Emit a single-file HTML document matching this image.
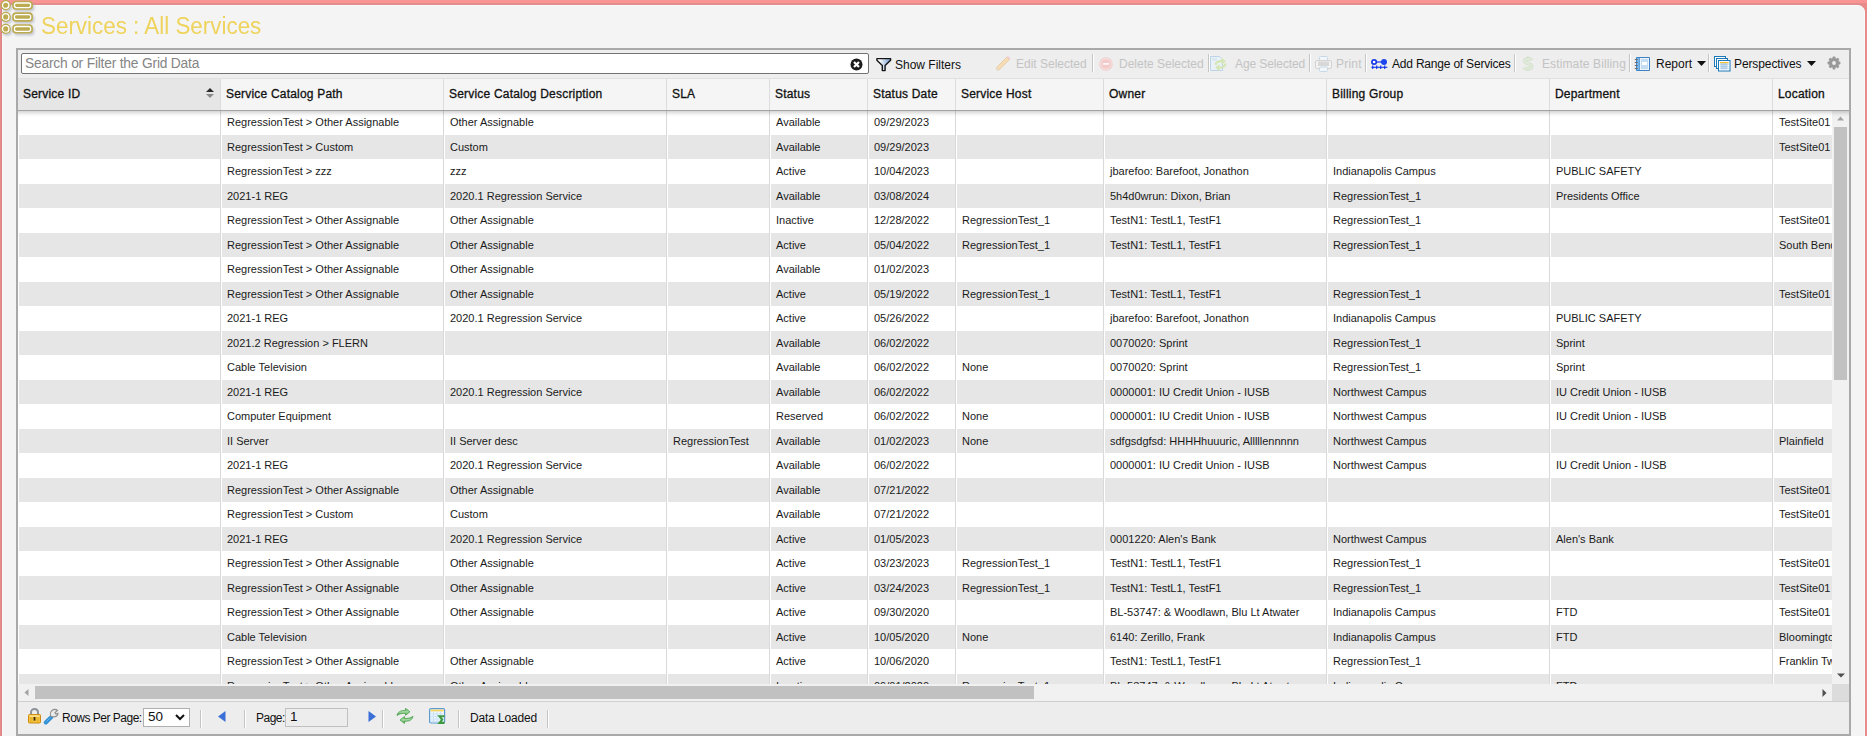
<!DOCTYPE html>
<html><head><meta charset="utf-8">
<style>
*{box-sizing:border-box}
html,body{margin:0;padding:0}
body{width:1867px;height:736px;overflow:hidden;background:#e98b8b;position:relative;font-family:"Liberation Sans",sans-serif}
#panel{position:absolute;left:2px;top:5px;width:1863px;height:740px;background:#f4f4f4;border:1px solid #f5fafa;border-top-right-radius:7px;border-top-left-radius:4px}
#ptop{position:absolute;left:0;top:0;width:1867px;height:3px;background:#f89494}
#ptop2{position:absolute;left:0;top:3px;width:1867px;height:2px;background:#e68b8b}
#pleft{position:absolute;left:1px;top:4px;width:1px;height:732px;background:#dc8383}
#title{position:absolute;left:41px;top:11.4px;font-size:23.5px;color:#eed35c;white-space:nowrap;line-height:30px;transform:scaleX(0.953);transform-origin:0 0}
#grid{position:absolute;left:16px;top:48px;width:1835px;height:688px;border:2px solid #a9a9a9;background:#fff}
#tb{position:absolute;left:0;top:0;width:1831px;height:28px;background:#eeeeee}
#search{position:absolute;left:3px;top:3px;width:848px;height:21px;border:1px solid #737373;border-radius:2px;background:#fff}
#search span{position:absolute;left:3px;top:0.5px;font-size:13.8px;letter-spacing:-0.2px;color:#858585;line-height:18px;white-space:nowrap}
#hdr{position:absolute;left:0;top:28px;width:1831px;height:32px;background:#f5f5f5;border-top:1px solid #e0e0e0}
.hc{position:absolute;top:0;height:31px}
.hc.sorted{background:#e6e6e6}
.ht{position:absolute;left:5px;top:8px;font-size:12px;font-weight:normal;-webkit-text-stroke:0.3px #111;letter-spacing:0.2px;color:#111;white-space:nowrap;line-height:14px}
.hl{position:absolute;top:0;width:1px;height:31px;background:#dcdcdc}
#hline{position:absolute;left:0;top:60px;width:1831px;height:1px;background:#a3a3a3;z-index:3}
#shadow{position:absolute;left:0;top:61px;width:1831px;height:6px;background:linear-gradient(rgba(0,0,0,0.16),rgba(0,0,0,0.04) 60%,rgba(0,0,0,0));z-index:3}
#data{position:absolute;left:0;top:60px;width:1814px;height:574px;overflow:hidden;background:#fff}
.row{position:absolute;left:0;width:1900px}
.c{position:absolute;top:0;height:100%;overflow:hidden;white-space:nowrap}
.row.alt .c{background:#e6e6e6}
.c span{position:absolute;left:5px;top:0;font-size:11px;color:#1a1a1a;line-height:24px}
.vl{position:absolute;top:0;width:1px;height:574px;background:#d9d9d9;z-index:2}
#vs{position:absolute;left:1814px;top:60px;width:17px;height:574px;background:#f1f1f1}
#hs{position:absolute;left:0;top:634px;width:1814px;height:17px;background:#f1f1f1}
#corner{position:absolute;left:1814px;top:634px;width:17px;height:17px;background:#dcdcdc}
#ft{position:absolute;left:0;top:651px;width:1831px;height:33px;background:#ededed;border-top:1px solid #cfcfcf}
.ftt{position:absolute;font-size:12px;color:#111;white-space:nowrap;line-height:14px;margin-top:-4px}
.sep{position:absolute;width:1px;background:#c4c4c4;box-shadow:1px 0 0 #fff}
.tbt{position:absolute;top:7px;font-size:12px;color:#111;white-space:nowrap;line-height:14px}
.tbt.dis{color:#c3c3c3}
.ic{position:absolute}
#sel{position:absolute;left:125px;top:6px;width:47px;height:19px;border:1px solid #b0b0b0;background:#fff}
#sel span{position:absolute;left:4px;top:0px;font-size:13.5px;color:#111;line-height:15px}
#pg{position:absolute;left:267px;top:6px;width:63px;height:19px;border:1px solid #c0c0c0;background:#ededed}
#pg span{position:absolute;left:4px;top:0px;font-size:13.5px;color:#111;line-height:15px}
.sort{position:absolute;left:188px;top:9px;width:8px;height:11px}
.sort:before{content:"";position:absolute;left:0;top:0;border-left:4px solid transparent;border-right:4px solid transparent;border-bottom:4.5px solid #2a2a2a}
.sort:after{content:"";position:absolute;left:0;top:6px;border-left:4px solid transparent;border-right:4px solid transparent;border-top:4.5px solid #8a8a8a}
#vthumb{position:absolute;left:2px;top:17px;width:13px;height:253px;background:#c1c1c1}
#hthumb{position:absolute;left:17px;top:2px;width:999px;height:13px;background:#c1c1c1}
</style></head><body>
<div id="ptop"></div><div id="ptop2"></div><div id="pleft"></div><div id="panel"></div>
<svg id="logo" style="position:absolute;left:0;top:0" width="40" height="40" viewBox="0 0 40 40">
<defs><filter id="sh" x="-20%" y="-20%" width="150%" height="150%"><feGaussianBlur stdDeviation="1.2"/></filter></defs>
<g filter="url(#sh)" fill="#9aa0b0" opacity="0.5" transform="translate(1.5,2)">
<circle cx="5.7" cy="5.2" r="5.1"/><circle cx="5.7" cy="16.9" r="5.1"/><circle cx="5.7" cy="28.9" r="5.1"/>
<rect x="12.2" y="0.8" width="20.7" height="9" rx="3.8"/><rect x="12.2" y="12.3" width="20.7" height="9.4" rx="3.8"/><rect x="12.2" y="24.2" width="20.7" height="9.4" rx="3.8"/></g>
<g fill="#bcab50">
<circle cx="5.7" cy="5.2" r="5.1"/><circle cx="5.7" cy="16.9" r="5.1"/><circle cx="5.7" cy="28.9" r="5.1"/>
<rect x="12.2" y="0.8" width="20.7" height="9" rx="3.8"/><rect x="12.2" y="12.3" width="20.7" height="9.4" rx="3.8"/><rect x="12.2" y="24.2" width="20.7" height="9.4" rx="3.8"/></g>
<g fill="none" stroke="#fff" stroke-width="1.3">
<circle cx="5.7" cy="5.2" r="3.2"/><circle cx="5.7" cy="16.9" r="3.2"/><circle cx="5.7" cy="28.9" r="3.2"/>
<rect x="14.45" y="3.0" width="16.2" height="4.6" rx="2"/><rect x="14.45" y="14.6" width="16.2" height="4.8" rx="2"/><rect x="14.45" y="26.5" width="16.2" height="4.8" rx="2"/></g>
</svg>
<div id="title">Services : All Services</div>
<div id="grid">
 <div id="tb">

  <div id="search"><span>Search or Filter the Grid Data</span>
   <svg style="position:absolute;left:828px;top:4px" width="13" height="13" viewBox="0 0 13 13"><circle cx="6.5" cy="6.5" r="6" fill="#1b1b1b"/><path d="M4 4L9 9M9 4L4 9" stroke="#fff" stroke-width="2.2" stroke-linecap="butt"/></svg>
  </div>
  <svg class="ic" style="left:858px;top:7px" width="16" height="15" viewBox="0 0 16 15"><defs><linearGradient id="fg" x1="0" x2="1"><stop offset="0.2" stop-color="#fff"/><stop offset="1" stop-color="#6f98cc"/></linearGradient></defs><path d="M0.9 1.6H14.6V3.2L9.1 8.4V13.6H6.3V8.4L0.9 3.2Z" fill="url(#fg)" stroke="#151515" stroke-width="1.4" stroke-linejoin="round"/></svg>
  <div class="tbt" style="left:877px;top:8px">Show Filters</div>
  <svg class="ic" style="left:977px;top:5px" width="17" height="17" viewBox="0 0 17 17"><path d="M2 15L1.5 12.5L12 2L14.5 4.5L4 15Z" fill="#f6dcb4" stroke="#e8cfa8" stroke-width="1"/><path d="M12 2L14.5 4.5L15.5 3.5L13 1Z" fill="#f0c8dc"/><path d="M1.5 12.5L2 15L4 15Z" fill="#ddd"/></svg>
  <div class="tbt dis" style="left:998px">Edit Selected</div>
  <div class="sep" style="left:1074px;top:4px;height:18px"></div>
  <svg class="ic" style="left:1081px;top:7px" width="14" height="14" viewBox="0 0 14 14"><circle cx="7" cy="7" r="6.8" fill="#f1cfcf"/><circle cx="7" cy="7" r="5.2" fill="#f2caca" stroke="#f7e3e3" stroke-width="0.9"/><rect x="4" y="6" width="6" height="1.8" fill="#fbf6f6"/></svg>
  <div class="tbt dis" style="left:1101px">Delete Selected</div>
  <div class="sep" style="left:1190px;top:4px;height:18px"></div>
  <svg class="ic" style="left:1192px;top:6px" width="17" height="16" viewBox="0 0 17 16"><path d="M0.5 0.5H9.5L12.5 3.5V14.5H0.5Z" fill="#eaf1f7" stroke="#bad3e7"/><rect x="2" y="2" width="5" height="3" fill="#dde9f2"/><g fill="none" stroke="#d3e6b4" stroke-width="2.2"><path d="M5.6 8.8Q6 5.2 12 5.2"/><path d="M15.4 7.5Q15 11.6 9 11.6"/></g><g fill="#d3e6b4"><path d="M11.5 1.8L16 5.2L11.5 8.6Z"/><path d="M9.5 8.2L5 11.6L9.5 15Z"/></g></svg>
  <div class="tbt dis" style="left:1217px;letter-spacing:-0.1px">Age Selected</div>
  <div class="sep" style="left:1291px;top:4px;height:18px"></div>
  <svg class="ic" style="left:1297px;top:6px" width="17" height="16" viewBox="0 0 17 16"><rect x="4.5" y="0.5" width="8" height="5.5" rx="1" fill="#f3f6f9" stroke="#c6d8e8"/><rect x="0.5" y="4.5" width="16" height="8" rx="1.5" fill="#f3f3f3" stroke="#d3d3d3"/><rect x="3" y="5.5" width="11" height="4.5" fill="#d8d8d8"/><rect x="4.5" y="11" width="8" height="4.5" rx="1" fill="#f3f6f9" stroke="#c6d8e8"/></svg>
  <div class="tbt dis" style="left:1318px;letter-spacing:0.2px">Print</div>
  <div class="sep" style="left:1347px;top:4px;height:18px"></div>
  <svg class="ic" style="left:1353px;top:8px" width="18" height="12" viewBox="0 0 18 12"><circle cx="3.1" cy="4" r="2.2" fill="#fff" stroke="#1838e6" stroke-width="1.7"/><circle cx="13" cy="4" r="3" fill="#1d47ee"/><rect x="5" y="3.4" width="6" height="1.2" fill="#1838e6"/><rect x="0.4" y="8.7" width="16" height="1.2" fill="#1c44ec"/><path d="M1.7 7.6V10.9M5.7 7.6V10.9M9.7 7.6V10.9M13.7 7.6V10.9" stroke="#1838e6" stroke-width="1.2"/></svg>
  <div class="tbt" style="left:1374px;letter-spacing:-0.2px">Add Range of Services</div>
  <div class="sep" style="left:1496px;top:4px;height:18px"></div>
  <svg class="ic" style="left:1504px;top:6px" width="12" height="16" viewBox="0 0 12 16"><path d="M6 0.5V3M6 12.5V15" stroke="#d2dfca" stroke-width="2.4"/><path d="M9.6 4.3C8.6 2.6 2.7 2.3 2.6 5C2.5 7.6 9.7 7.2 9.6 10.5C9.5 13.4 3.2 13.3 2.2 11.2" fill="none" stroke="#d2dfca" stroke-width="3.6"/><path d="M9.6 4.3C8.6 2.6 2.7 2.3 2.6 5C2.5 7.6 9.7 7.2 9.6 10.5C9.5 13.4 3.2 13.3 2.2 11.2" fill="none" stroke="#e0ead9" stroke-width="2"/></svg>
  <div class="tbt dis" style="left:1524px;letter-spacing:0.12px">Estimate Billing</div>
  <div class="sep" style="left:1611px;top:4px;height:18px"></div>
  <svg class="ic" style="left:1616px;top:5px" width="17" height="17" viewBox="0 0 17 17"><rect x="2" y="2" width="14" height="14" rx="1" fill="#3d82c4"/><rect x="3" y="3" width="2.6" height="12" fill="#7ab8ea"/><rect x="6" y="3" width="9" height="12" fill="#eef5fc"/><rect x="7" y="4" width="7" height="10" fill="#c5ddf2"/><rect x="8" y="7" width="5" height="3" fill="#fff"/><path d="M0.8 4.5H3.8M0.8 7.5H3.8M0.8 10.5H3.8M0.8 13.5H3.8" stroke="#6f6f6f" stroke-width="1.1"/></svg>
  <div class="tbt" style="left:1638px">Report</div>
  <svg class="ic" style="left:1679px;top:11px" width="9" height="5" viewBox="0 0 9 5"><path d="M0 0H9L4.5 5Z" fill="#111"/></svg>
  <div class="sep" style="left:1690px;top:4px;height:18px"></div>
  <svg class="ic" style="left:1696px;top:6px" width="17" height="16" viewBox="0 0 17 16"><rect x="0.5" y="0.5" width="11" height="10" fill="#fff" stroke="#1a78b8"/><rect x="2.5" y="2.5" width="11" height="10" fill="#fff" stroke="#1a78b8"/><rect x="4.5" y="4.5" width="11.5" height="10.5" fill="#fff" stroke="#1a78b8"/><rect x="6" y="6" width="8.5" height="1.3" fill="#f2c031"/><path d="M6 8.2H14.5M6 10.2H14.5M6 12.2H14.5M8 7.3V13.5M10 7.3V13.5M12 7.3V13.5" stroke="#9fc3e3" stroke-width="1"/></svg>
  <div class="tbt" style="left:1716px;letter-spacing:-0.1px">Perspectives</div>
  <svg class="ic" style="left:1789px;top:11px" width="9" height="5" viewBox="0 0 9 5"><path d="M0 0H9L4.5 5Z" fill="#111"/></svg>
  <svg class="ic" style="left:1809px;top:6px" width="14" height="14" viewBox="0 0 14 14"><g fill="#999"><circle cx="7" cy="7" r="5"/><rect x="5.6" y="0.6" width="2.8" height="12.8" rx="0.6"/><rect x="5.6" y="0.6" width="2.8" height="12.8" rx="0.6" transform="rotate(45 7 7)"/><rect x="5.6" y="0.6" width="2.8" height="12.8" rx="0.6" transform="rotate(90 7 7)"/><rect x="5.6" y="0.6" width="2.8" height="12.8" rx="0.6" transform="rotate(135 7 7)"/></g><circle cx="7" cy="7" r="1.9" fill="#eeeeee"/></svg>
 </div>
 <div id="hdr"><div class="hc sorted" style="left:0px;width:202px"><span class="ht">Service ID</span><span class="sort"></span></div><div class="hc" style="left:203px;width:222px"><span class="ht">Service Catalog Path</span></div><div class="hc" style="left:426px;width:222px"><span class="ht">Service Catalog Description</span></div><div class="hc" style="left:649px;width:102px"><span class="ht">SLA</span></div><div class="hc" style="left:752px;width:97px"><span class="ht">Status</span></div><div class="hc" style="left:850px;width:87px"><span class="ht">Status Date</span></div><div class="hc" style="left:938px;width:147px"><span class="ht">Service Host</span></div><div class="hc" style="left:1086px;width:222px"><span class="ht">Owner</span></div><div class="hc" style="left:1309px;width:222px"><span class="ht">Billing Group</span></div><div class="hc" style="left:1532px;width:222px"><span class="ht">Department</span></div><div class="hc" style="left:1755px;width:127px"><span class="ht">Location</span></div><div class="hl" style="left:202px"></div><div class="hl" style="left:425px"></div><div class="hl" style="left:648px"></div><div class="hl" style="left:751px"></div><div class="hl" style="left:849px"></div><div class="hl" style="left:937px"></div><div class="hl" style="left:1085px"></div><div class="hl" style="left:1308px"></div><div class="hl" style="left:1531px"></div><div class="hl" style="left:1754px"></div></div>
 <div id="data"><div class="row" style="top:0px;height:25px"><div class="c" style="left:1px;width:201px"><span></span></div><div class="c" style="left:204px;width:221px"><span>RegressionTest &gt; Other Assignable</span></div><div class="c" style="left:427px;width:221px"><span>Other Assignable</span></div><div class="c" style="left:650px;width:101px"><span></span></div><div class="c" style="left:753px;width:96px"><span>Available</span></div><div class="c" style="left:851px;width:86px"><span>09/29/2023</span></div><div class="c" style="left:939px;width:146px"><span></span></div><div class="c" style="left:1087px;width:221px"><span></span></div><div class="c" style="left:1310px;width:221px"><span></span></div><div class="c" style="left:1533px;width:221px"><span></span></div><div class="c" style="left:1756px;width:126px"><span>TestSite01</span></div></div><div class="row alt" style="top:25px;height:24px"><div class="c" style="left:1px;width:201px"><span></span></div><div class="c" style="left:204px;width:221px"><span>RegressionTest &gt; Custom</span></div><div class="c" style="left:427px;width:221px"><span>Custom</span></div><div class="c" style="left:650px;width:101px"><span></span></div><div class="c" style="left:753px;width:96px"><span>Available</span></div><div class="c" style="left:851px;width:86px"><span>09/29/2023</span></div><div class="c" style="left:939px;width:146px"><span></span></div><div class="c" style="left:1087px;width:221px"><span></span></div><div class="c" style="left:1310px;width:221px"><span></span></div><div class="c" style="left:1533px;width:221px"><span></span></div><div class="c" style="left:1756px;width:126px"><span>TestSite01</span></div></div><div class="row" style="top:49px;height:25px"><div class="c" style="left:1px;width:201px"><span></span></div><div class="c" style="left:204px;width:221px"><span>RegressionTest &gt; zzz</span></div><div class="c" style="left:427px;width:221px"><span>zzz</span></div><div class="c" style="left:650px;width:101px"><span></span></div><div class="c" style="left:753px;width:96px"><span>Active</span></div><div class="c" style="left:851px;width:86px"><span>10/04/2023</span></div><div class="c" style="left:939px;width:146px"><span></span></div><div class="c" style="left:1087px;width:221px"><span>jbarefoo: Barefoot, Jonathon</span></div><div class="c" style="left:1310px;width:221px"><span>Indianapolis Campus</span></div><div class="c" style="left:1533px;width:221px"><span>PUBLIC SAFETY</span></div><div class="c" style="left:1756px;width:126px"><span></span></div></div><div class="row alt" style="top:74px;height:24px"><div class="c" style="left:1px;width:201px"><span></span></div><div class="c" style="left:204px;width:221px"><span>2021-1 REG</span></div><div class="c" style="left:427px;width:221px"><span>2020.1 Regression Service</span></div><div class="c" style="left:650px;width:101px"><span></span></div><div class="c" style="left:753px;width:96px"><span>Available</span></div><div class="c" style="left:851px;width:86px"><span>03/08/2024</span></div><div class="c" style="left:939px;width:146px"><span></span></div><div class="c" style="left:1087px;width:221px"><span>5h4d0wrun: Dixon, Brian</span></div><div class="c" style="left:1310px;width:221px"><span>RegressionTest_1</span></div><div class="c" style="left:1533px;width:221px"><span>Presidents Office</span></div><div class="c" style="left:1756px;width:126px"><span></span></div></div><div class="row" style="top:98px;height:25px"><div class="c" style="left:1px;width:201px"><span></span></div><div class="c" style="left:204px;width:221px"><span>RegressionTest &gt; Other Assignable</span></div><div class="c" style="left:427px;width:221px"><span>Other Assignable</span></div><div class="c" style="left:650px;width:101px"><span></span></div><div class="c" style="left:753px;width:96px"><span>Inactive</span></div><div class="c" style="left:851px;width:86px"><span>12/28/2022</span></div><div class="c" style="left:939px;width:146px"><span>RegressionTest_1</span></div><div class="c" style="left:1087px;width:221px"><span>TestN1: TestL1, TestF1</span></div><div class="c" style="left:1310px;width:221px"><span>RegressionTest_1</span></div><div class="c" style="left:1533px;width:221px"><span></span></div><div class="c" style="left:1756px;width:126px"><span>TestSite01</span></div></div><div class="row alt" style="top:123px;height:24px"><div class="c" style="left:1px;width:201px"><span></span></div><div class="c" style="left:204px;width:221px"><span>RegressionTest &gt; Other Assignable</span></div><div class="c" style="left:427px;width:221px"><span>Other Assignable</span></div><div class="c" style="left:650px;width:101px"><span></span></div><div class="c" style="left:753px;width:96px"><span>Active</span></div><div class="c" style="left:851px;width:86px"><span>05/04/2022</span></div><div class="c" style="left:939px;width:146px"><span>RegressionTest_1</span></div><div class="c" style="left:1087px;width:221px"><span>TestN1: TestL1, TestF1</span></div><div class="c" style="left:1310px;width:221px"><span>RegressionTest_1</span></div><div class="c" style="left:1533px;width:221px"><span></span></div><div class="c" style="left:1756px;width:126px"><span>South Bend</span></div></div><div class="row" style="top:147px;height:25px"><div class="c" style="left:1px;width:201px"><span></span></div><div class="c" style="left:204px;width:221px"><span>RegressionTest &gt; Other Assignable</span></div><div class="c" style="left:427px;width:221px"><span>Other Assignable</span></div><div class="c" style="left:650px;width:101px"><span></span></div><div class="c" style="left:753px;width:96px"><span>Available</span></div><div class="c" style="left:851px;width:86px"><span>01/02/2023</span></div><div class="c" style="left:939px;width:146px"><span></span></div><div class="c" style="left:1087px;width:221px"><span></span></div><div class="c" style="left:1310px;width:221px"><span></span></div><div class="c" style="left:1533px;width:221px"><span></span></div><div class="c" style="left:1756px;width:126px"><span></span></div></div><div class="row alt" style="top:172px;height:24px"><div class="c" style="left:1px;width:201px"><span></span></div><div class="c" style="left:204px;width:221px"><span>RegressionTest &gt; Other Assignable</span></div><div class="c" style="left:427px;width:221px"><span>Other Assignable</span></div><div class="c" style="left:650px;width:101px"><span></span></div><div class="c" style="left:753px;width:96px"><span>Active</span></div><div class="c" style="left:851px;width:86px"><span>05/19/2022</span></div><div class="c" style="left:939px;width:146px"><span>RegressionTest_1</span></div><div class="c" style="left:1087px;width:221px"><span>TestN1: TestL1, TestF1</span></div><div class="c" style="left:1310px;width:221px"><span>RegressionTest_1</span></div><div class="c" style="left:1533px;width:221px"><span></span></div><div class="c" style="left:1756px;width:126px"><span>TestSite01</span></div></div><div class="row" style="top:196px;height:25px"><div class="c" style="left:1px;width:201px"><span></span></div><div class="c" style="left:204px;width:221px"><span>2021-1 REG</span></div><div class="c" style="left:427px;width:221px"><span>2020.1 Regression Service</span></div><div class="c" style="left:650px;width:101px"><span></span></div><div class="c" style="left:753px;width:96px"><span>Active</span></div><div class="c" style="left:851px;width:86px"><span>05/26/2022</span></div><div class="c" style="left:939px;width:146px"><span></span></div><div class="c" style="left:1087px;width:221px"><span>jbarefoo: Barefoot, Jonathon</span></div><div class="c" style="left:1310px;width:221px"><span>Indianapolis Campus</span></div><div class="c" style="left:1533px;width:221px"><span>PUBLIC SAFETY</span></div><div class="c" style="left:1756px;width:126px"><span></span></div></div><div class="row alt" style="top:221px;height:24px"><div class="c" style="left:1px;width:201px"><span></span></div><div class="c" style="left:204px;width:221px"><span>2021.2 Regression &gt; FLERN</span></div><div class="c" style="left:427px;width:221px"><span></span></div><div class="c" style="left:650px;width:101px"><span></span></div><div class="c" style="left:753px;width:96px"><span>Available</span></div><div class="c" style="left:851px;width:86px"><span>06/02/2022</span></div><div class="c" style="left:939px;width:146px"><span></span></div><div class="c" style="left:1087px;width:221px"><span>0070020: Sprint</span></div><div class="c" style="left:1310px;width:221px"><span>RegressionTest_1</span></div><div class="c" style="left:1533px;width:221px"><span>Sprint</span></div><div class="c" style="left:1756px;width:126px"><span></span></div></div><div class="row" style="top:245px;height:25px"><div class="c" style="left:1px;width:201px"><span></span></div><div class="c" style="left:204px;width:221px"><span>Cable Television</span></div><div class="c" style="left:427px;width:221px"><span></span></div><div class="c" style="left:650px;width:101px"><span></span></div><div class="c" style="left:753px;width:96px"><span>Available</span></div><div class="c" style="left:851px;width:86px"><span>06/02/2022</span></div><div class="c" style="left:939px;width:146px"><span>None</span></div><div class="c" style="left:1087px;width:221px"><span>0070020: Sprint</span></div><div class="c" style="left:1310px;width:221px"><span>RegressionTest_1</span></div><div class="c" style="left:1533px;width:221px"><span>Sprint</span></div><div class="c" style="left:1756px;width:126px"><span></span></div></div><div class="row alt" style="top:270px;height:24px"><div class="c" style="left:1px;width:201px"><span></span></div><div class="c" style="left:204px;width:221px"><span>2021-1 REG</span></div><div class="c" style="left:427px;width:221px"><span>2020.1 Regression Service</span></div><div class="c" style="left:650px;width:101px"><span></span></div><div class="c" style="left:753px;width:96px"><span>Available</span></div><div class="c" style="left:851px;width:86px"><span>06/02/2022</span></div><div class="c" style="left:939px;width:146px"><span></span></div><div class="c" style="left:1087px;width:221px"><span>0000001: IU Credit Union - IUSB</span></div><div class="c" style="left:1310px;width:221px"><span>Northwest Campus</span></div><div class="c" style="left:1533px;width:221px"><span>IU Credit Union - IUSB</span></div><div class="c" style="left:1756px;width:126px"><span></span></div></div><div class="row" style="top:294px;height:25px"><div class="c" style="left:1px;width:201px"><span></span></div><div class="c" style="left:204px;width:221px"><span>Computer Equipment</span></div><div class="c" style="left:427px;width:221px"><span></span></div><div class="c" style="left:650px;width:101px"><span></span></div><div class="c" style="left:753px;width:96px"><span>Reserved</span></div><div class="c" style="left:851px;width:86px"><span>06/02/2022</span></div><div class="c" style="left:939px;width:146px"><span>None</span></div><div class="c" style="left:1087px;width:221px"><span>0000001: IU Credit Union - IUSB</span></div><div class="c" style="left:1310px;width:221px"><span>Northwest Campus</span></div><div class="c" style="left:1533px;width:221px"><span>IU Credit Union - IUSB</span></div><div class="c" style="left:1756px;width:126px"><span></span></div></div><div class="row alt" style="top:319px;height:24px"><div class="c" style="left:1px;width:201px"><span></span></div><div class="c" style="left:204px;width:221px"><span>II Server</span></div><div class="c" style="left:427px;width:221px"><span>II Server desc</span></div><div class="c" style="left:650px;width:101px"><span>RegressionTest</span></div><div class="c" style="left:753px;width:96px"><span>Available</span></div><div class="c" style="left:851px;width:86px"><span>01/02/2023</span></div><div class="c" style="left:939px;width:146px"><span>None</span></div><div class="c" style="left:1087px;width:221px"><span>sdfgsdgfsd: HHHHhuuuric, Alllllennnnn</span></div><div class="c" style="left:1310px;width:221px"><span>Northwest Campus</span></div><div class="c" style="left:1533px;width:221px"><span></span></div><div class="c" style="left:1756px;width:126px"><span>Plainfield</span></div></div><div class="row" style="top:343px;height:25px"><div class="c" style="left:1px;width:201px"><span></span></div><div class="c" style="left:204px;width:221px"><span>2021-1 REG</span></div><div class="c" style="left:427px;width:221px"><span>2020.1 Regression Service</span></div><div class="c" style="left:650px;width:101px"><span></span></div><div class="c" style="left:753px;width:96px"><span>Available</span></div><div class="c" style="left:851px;width:86px"><span>06/02/2022</span></div><div class="c" style="left:939px;width:146px"><span></span></div><div class="c" style="left:1087px;width:221px"><span>0000001: IU Credit Union - IUSB</span></div><div class="c" style="left:1310px;width:221px"><span>Northwest Campus</span></div><div class="c" style="left:1533px;width:221px"><span>IU Credit Union - IUSB</span></div><div class="c" style="left:1756px;width:126px"><span></span></div></div><div class="row alt" style="top:368px;height:24px"><div class="c" style="left:1px;width:201px"><span></span></div><div class="c" style="left:204px;width:221px"><span>RegressionTest &gt; Other Assignable</span></div><div class="c" style="left:427px;width:221px"><span>Other Assignable</span></div><div class="c" style="left:650px;width:101px"><span></span></div><div class="c" style="left:753px;width:96px"><span>Available</span></div><div class="c" style="left:851px;width:86px"><span>07/21/2022</span></div><div class="c" style="left:939px;width:146px"><span></span></div><div class="c" style="left:1087px;width:221px"><span></span></div><div class="c" style="left:1310px;width:221px"><span></span></div><div class="c" style="left:1533px;width:221px"><span></span></div><div class="c" style="left:1756px;width:126px"><span>TestSite01</span></div></div><div class="row" style="top:392px;height:25px"><div class="c" style="left:1px;width:201px"><span></span></div><div class="c" style="left:204px;width:221px"><span>RegressionTest &gt; Custom</span></div><div class="c" style="left:427px;width:221px"><span>Custom</span></div><div class="c" style="left:650px;width:101px"><span></span></div><div class="c" style="left:753px;width:96px"><span>Available</span></div><div class="c" style="left:851px;width:86px"><span>07/21/2022</span></div><div class="c" style="left:939px;width:146px"><span></span></div><div class="c" style="left:1087px;width:221px"><span></span></div><div class="c" style="left:1310px;width:221px"><span></span></div><div class="c" style="left:1533px;width:221px"><span></span></div><div class="c" style="left:1756px;width:126px"><span>TestSite01</span></div></div><div class="row alt" style="top:417px;height:24px"><div class="c" style="left:1px;width:201px"><span></span></div><div class="c" style="left:204px;width:221px"><span>2021-1 REG</span></div><div class="c" style="left:427px;width:221px"><span>2020.1 Regression Service</span></div><div class="c" style="left:650px;width:101px"><span></span></div><div class="c" style="left:753px;width:96px"><span>Active</span></div><div class="c" style="left:851px;width:86px"><span>01/05/2023</span></div><div class="c" style="left:939px;width:146px"><span></span></div><div class="c" style="left:1087px;width:221px"><span>0001220: Alen&#x27;s Bank</span></div><div class="c" style="left:1310px;width:221px"><span>Northwest Campus</span></div><div class="c" style="left:1533px;width:221px"><span>Alen&#x27;s Bank</span></div><div class="c" style="left:1756px;width:126px"><span></span></div></div><div class="row" style="top:441px;height:25px"><div class="c" style="left:1px;width:201px"><span></span></div><div class="c" style="left:204px;width:221px"><span>RegressionTest &gt; Other Assignable</span></div><div class="c" style="left:427px;width:221px"><span>Other Assignable</span></div><div class="c" style="left:650px;width:101px"><span></span></div><div class="c" style="left:753px;width:96px"><span>Active</span></div><div class="c" style="left:851px;width:86px"><span>03/23/2023</span></div><div class="c" style="left:939px;width:146px"><span>RegressionTest_1</span></div><div class="c" style="left:1087px;width:221px"><span>TestN1: TestL1, TestF1</span></div><div class="c" style="left:1310px;width:221px"><span>RegressionTest_1</span></div><div class="c" style="left:1533px;width:221px"><span></span></div><div class="c" style="left:1756px;width:126px"><span>TestSite01</span></div></div><div class="row alt" style="top:466px;height:24px"><div class="c" style="left:1px;width:201px"><span></span></div><div class="c" style="left:204px;width:221px"><span>RegressionTest &gt; Other Assignable</span></div><div class="c" style="left:427px;width:221px"><span>Other Assignable</span></div><div class="c" style="left:650px;width:101px"><span></span></div><div class="c" style="left:753px;width:96px"><span>Active</span></div><div class="c" style="left:851px;width:86px"><span>03/24/2023</span></div><div class="c" style="left:939px;width:146px"><span>RegressionTest_1</span></div><div class="c" style="left:1087px;width:221px"><span>TestN1: TestL1, TestF1</span></div><div class="c" style="left:1310px;width:221px"><span>RegressionTest_1</span></div><div class="c" style="left:1533px;width:221px"><span></span></div><div class="c" style="left:1756px;width:126px"><span>TestSite01</span></div></div><div class="row" style="top:490px;height:25px"><div class="c" style="left:1px;width:201px"><span></span></div><div class="c" style="left:204px;width:221px"><span>RegressionTest &gt; Other Assignable</span></div><div class="c" style="left:427px;width:221px"><span>Other Assignable</span></div><div class="c" style="left:650px;width:101px"><span></span></div><div class="c" style="left:753px;width:96px"><span>Active</span></div><div class="c" style="left:851px;width:86px"><span>09/30/2020</span></div><div class="c" style="left:939px;width:146px"><span></span></div><div class="c" style="left:1087px;width:221px"><span>BL-53747: &amp; Woodlawn, Blu Lt Atwater</span></div><div class="c" style="left:1310px;width:221px"><span>Indianapolis Campus</span></div><div class="c" style="left:1533px;width:221px"><span>FTD</span></div><div class="c" style="left:1756px;width:126px"><span>TestSite01</span></div></div><div class="row alt" style="top:515px;height:24px"><div class="c" style="left:1px;width:201px"><span></span></div><div class="c" style="left:204px;width:221px"><span>Cable Television</span></div><div class="c" style="left:427px;width:221px"><span></span></div><div class="c" style="left:650px;width:101px"><span></span></div><div class="c" style="left:753px;width:96px"><span>Active</span></div><div class="c" style="left:851px;width:86px"><span>10/05/2020</span></div><div class="c" style="left:939px;width:146px"><span>None</span></div><div class="c" style="left:1087px;width:221px"><span>6140: Zerillo, Frank</span></div><div class="c" style="left:1310px;width:221px"><span>Indianapolis Campus</span></div><div class="c" style="left:1533px;width:221px"><span>FTD</span></div><div class="c" style="left:1756px;width:126px"><span>Bloomington</span></div></div><div class="row" style="top:539px;height:25px"><div class="c" style="left:1px;width:201px"><span></span></div><div class="c" style="left:204px;width:221px"><span>RegressionTest &gt; Other Assignable</span></div><div class="c" style="left:427px;width:221px"><span>Other Assignable</span></div><div class="c" style="left:650px;width:101px"><span></span></div><div class="c" style="left:753px;width:96px"><span>Active</span></div><div class="c" style="left:851px;width:86px"><span>10/06/2020</span></div><div class="c" style="left:939px;width:146px"><span></span></div><div class="c" style="left:1087px;width:221px"><span>TestN1: TestL1, TestF1</span></div><div class="c" style="left:1310px;width:221px"><span>RegressionTest_1</span></div><div class="c" style="left:1533px;width:221px"><span></span></div><div class="c" style="left:1756px;width:126px"><span>Franklin Twp</span></div></div><div class="row alt" style="top:564px;height:24px"><div class="c" style="left:1px;width:201px"><span></span></div><div class="c" style="left:204px;width:221px"><span>RegressionTest &gt; Other Assignable</span></div><div class="c" style="left:427px;width:221px"><span>Other Assignable</span></div><div class="c" style="left:650px;width:101px"><span></span></div><div class="c" style="left:753px;width:96px"><span>Inactive</span></div><div class="c" style="left:851px;width:86px"><span>09/01/2020</span></div><div class="c" style="left:939px;width:146px"><span>RegressionTest_1</span></div><div class="c" style="left:1087px;width:221px"><span>BL-53747: &amp; Woodlawn, Blu Lt Atwater</span></div><div class="c" style="left:1310px;width:221px"><span>Indianapolis Campus</span></div><div class="c" style="left:1533px;width:221px"><span>FTD</span></div><div class="c" style="left:1756px;width:126px"><span></span></div></div><div class="vl" style="left:202px"></div><div class="vl" style="left:425px"></div><div class="vl" style="left:648px"></div><div class="vl" style="left:751px"></div><div class="vl" style="left:849px"></div><div class="vl" style="left:937px"></div><div class="vl" style="left:1085px"></div><div class="vl" style="left:1308px"></div><div class="vl" style="left:1531px"></div><div class="vl" style="left:1754px"></div></div>
 <div id="hline"></div><div id="shadow"></div>
 <div id="vs"><div id="vthumb"></div>
  <svg class="ic" style="left:5px;top:6px" width="7" height="5" viewBox="0 0 7 5"><path d="M0 4.5H7L3.5 0.5Z" fill="#a3a3a3"/></svg>
  <svg class="ic" style="left:5px;top:563px" width="8" height="5" viewBox="0 0 8 5"><path d="M0 0.5H8L4 4.5Z" fill="#505050"/></svg></div>
 <div id="hs"><div id="hthumb"></div>
  <svg class="ic" style="left:6px;top:5px" width="5" height="7" viewBox="0 0 5 7"><path d="M4.5 0V7L0.5 3.5Z" fill="#a3a3a3"/></svg>
  <svg class="ic" style="left:1804px;top:5px" width="5" height="8" viewBox="0 0 5 8"><path d="M0.5 0V8L4.5 4Z" fill="#505050"/></svg></div>
 <div id="corner"></div>
 <div id="ft">
  <svg class="ic" style="left:10px;top:6px" width="13" height="16" viewBox="0 0 13 16"><path d="M3 7V4.5C3 2.2 4.5 1 6.5 1S10 2.2 10 4.5V7" fill="none" stroke="#8d939b" stroke-width="2"/><rect x="0.5" y="6.5" width="12" height="8.5" rx="1" fill="#f5c542" stroke="#cf8a12"/><rect x="1.5" y="7.5" width="10" height="1.2" fill="#fde9a0"/><path d="M2 10H4.5M8.5 10H11M2 12H4.5M8.5 12H11M2 14H4.5M8.5 14H11" stroke="#e2a11c" stroke-width="0.9"/><rect x="5.6" y="9" width="1.8" height="3.6" fill="#3a2600"/></svg>
  <svg class="ic" style="left:25px;top:6px" width="16" height="17" viewBox="0 0 16 17"><path d="M2.8 14.5L8.5 8.8" stroke="#2f8fd6" stroke-width="4" stroke-linecap="round"/><path d="M2.8 14.3L8.2 8.9" stroke="#9fd5f5" stroke-width="0.9" stroke-dasharray="1 0.8"/><path d="M8 8.5C7 6.5 7.2 3.5 9.5 2C11 1.2 13.5 1.5 14.5 2.5L12 4.5L13 6L15 5.3C15 7.5 13 9 10.5 8.8Z" fill="#e9e9e9" stroke="#8c8c8c" stroke-width="1.1"/></svg>
  <div class="ftt" style="left:44px;top:13px;letter-spacing:-0.5px">Rows Per Page:</div>
  <div id="sel"><span>50</span><svg style="position:absolute;left:31px;top:5px" width="10" height="7" viewBox="0 0 10 7"><path d="M1 1L5 5L9 1" fill="none" stroke="#111" stroke-width="2"/></svg></div>
  <div class="sep" style="left:182px;top:8px;height:18px"></div>
  <svg class="ic" style="left:200px;top:9px" width="8" height="11" viewBox="0 0 8 11"><path d="M7.5 0V11L0 5.5Z" fill="#3a6fd8"/></svg>
  <div class="sep" style="left:226px;top:8px;height:18px"></div>
  <div class="ftt" style="left:238px;top:13px;letter-spacing:-0.5px">Page:</div>
  <div id="pg"><span>1</span></div>
  <svg class="ic" style="left:350px;top:9px" width="8" height="11" viewBox="0 0 8 11"><path d="M0.5 0V11L8 5.5Z" fill="#3a6fd8"/></svg>
  <div class="sep" style="left:364px;top:8px;height:18px"></div>
  <svg class="ic" style="left:378px;top:6px" width="18" height="17" viewBox="0 0 18 17"><defs><linearGradient id="rg" x1="0" y1="0" x2="0" y2="1"><stop offset="0" stop-color="#5db55d"/><stop offset="0.5" stop-color="#a6dba6"/><stop offset="1" stop-color="#3c933c"/></linearGradient></defs><path d="M1 7.5C1.5 4 4.5 2.4 9.5 2.4V0.3L14 3.8L9.5 7.3V5.3C6 5.3 3 5.8 1 7.5Z" fill="url(#rg)" stroke="#3f9a3f" stroke-width="0.7"/><path d="M17 8.3C16.5 11.8 13.5 13.4 8.5 13.4V15.5L4 12L8.5 8.5V10.5C12 10.5 15 10 17 8.3Z" fill="url(#rg)" stroke="#3f9a3f" stroke-width="0.7"/></svg>
  <svg class="ic" style="left:411px;top:6px" width="17" height="17" viewBox="0 0 17 17"><rect x="0.6" y="0.6" width="15" height="14.4" rx="1.5" fill="#eef7fd" stroke="#5b9bcf" stroke-width="1.2"/><rect x="1.6" y="1.6" width="13" height="1.8" fill="#f6d55e"/><path d="M4.5 3.5V14.5M8 3.5V14.5M11.5 3.5V14.5M1.5 6H14.5M1.5 8.5H14.5M1.5 11H14.5M1.5 13.3H14.5" stroke="#c9e2f5" stroke-width="1"/><path d="M15.5 8.3H10.5L13.2 11.6L10.5 14.9H15.5" fill="none" stroke="#3f9a3f" stroke-width="2.1" stroke-linejoin="miter"/></svg>
  <div class="sep" style="left:440px;top:8px;height:18px"></div>
  <div class="ftt" style="left:452px;top:13px;letter-spacing:-0.15px">Data Loaded</div>
  <div class="sep" style="left:529px;top:8px;height:18px"></div>
</div>
</div>
</body></html>
